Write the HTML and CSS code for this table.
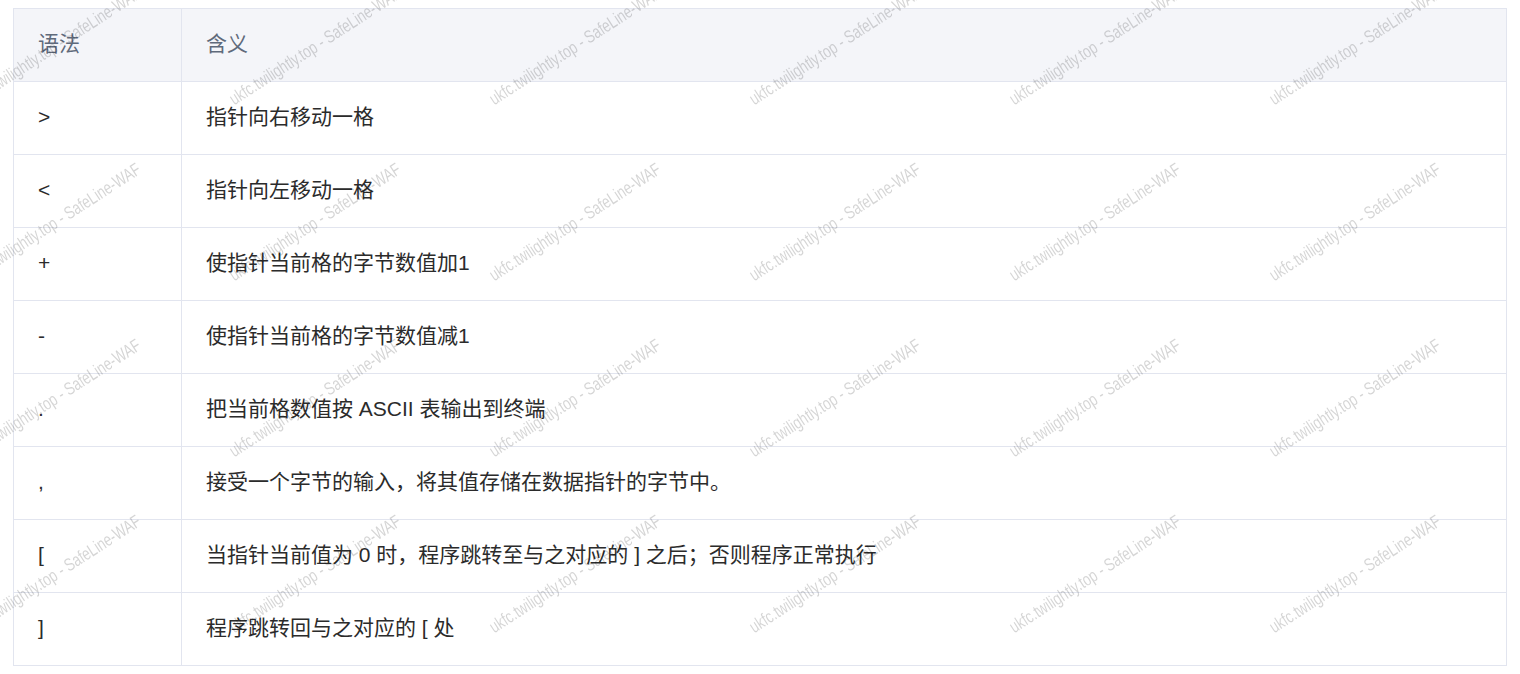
FILE: index.html
```html
<!DOCTYPE html>
<html lang="zh-CN">
<head>
  <meta charset="UTF-8">
  <meta name="viewport" content="width=device-width, initial-scale=1.0">
  <title>Brainfuck 语法</title>
  <link rel="stylesheet" href="styles.css">
</head>
<body>
  <table class="syntax-table">
    <thead>
      <tr>
        <th class="col-op">语法</th>
        <th>含义</th>
      </tr>
    </thead>
    <tbody>
      <tr><td class="col-op">&gt;</td><td>指针向右移动一格</td></tr>
      <tr><td class="col-op">&lt;</td><td>指针向左移动一格</td></tr>
      <tr><td class="col-op">+</td><td>使指针当前格的字节数值加1</td></tr>
      <tr><td class="col-op">-</td><td>使指针当前格的字节数值减1</td></tr>
      <tr><td class="col-op">.</td><td>把当前格数值按 ASCII 表输出到终端</td></tr>
      <tr><td class="col-op">,</td><td>接受一个字节的输入，将其值存储在数据指针的字节中。</td></tr>
      <tr><td class="col-op">[</td><td>当指针当前值为 0 时，程序跳转至与之对应的 ] 之后；否则程序正常执行</td></tr>
      <tr><td class="col-op">]</td><td>程序跳转回与之对应的 [ 处</td></tr>
    </tbody>
  </table>

  <div class="watermarks" aria-hidden="true">
    <span>ukfc.twilightly.top - SafeLine-WAF</span>
    <span>ukfc.twilightly.top - SafeLine-WAF</span>
    <span>ukfc.twilightly.top - SafeLine-WAF</span>
    <span>ukfc.twilightly.top - SafeLine-WAF</span>
    <span>ukfc.twilightly.top - SafeLine-WAF</span>
    <span>ukfc.twilightly.top - SafeLine-WAF</span>
    <span>ukfc.twilightly.top - SafeLine-WAF</span>
    <span>ukfc.twilightly.top - SafeLine-WAF</span>
    <span>ukfc.twilightly.top - SafeLine-WAF</span>
    <span>ukfc.twilightly.top - SafeLine-WAF</span>
    <span>ukfc.twilightly.top - SafeLine-WAF</span>
    <span>ukfc.twilightly.top - SafeLine-WAF</span>
    <span>ukfc.twilightly.top - SafeLine-WAF</span>
    <span>ukfc.twilightly.top - SafeLine-WAF</span>
    <span>ukfc.twilightly.top - SafeLine-WAF</span>
    <span>ukfc.twilightly.top - SafeLine-WAF</span>
    <span>ukfc.twilightly.top - SafeLine-WAF</span>
    <span>ukfc.twilightly.top - SafeLine-WAF</span>
    <span>ukfc.twilightly.top - SafeLine-WAF</span>
    <span>ukfc.twilightly.top - SafeLine-WAF</span>
    <span>ukfc.twilightly.top - SafeLine-WAF</span>
    <span>ukfc.twilightly.top - SafeLine-WAF</span>
    <span>ukfc.twilightly.top - SafeLine-WAF</span>
    <span>ukfc.twilightly.top - SafeLine-WAF</span>
  </div>
</body>
</html>
```

FILE: styles.css
```css
body {
  margin: 0;
  background: #ffffff;
  font-family: 'Liberation Sans', 'Noto Sans CJK SC', sans-serif;
  color: #2b2b2b;
  overflow: hidden;
}

.syntax-table {
  width: 1494px;
  margin: 8px 0 0 13px;
  border-collapse: collapse;
  font-size: 21px;
  line-height: 1.2;
}

.syntax-table th,
.syntax-table td {
  height: 70px;
  padding: 0 24px 2px;
  border: 1px solid #e2e5ef;
  text-align: left;
  vertical-align: middle;
}

.syntax-table th {
  background: #f4f5f9;
  color: #5f6a7b;
  font-weight: normal;
}

.syntax-table .col-op {
  width: 119px;
}

/* watermark overlay */
.watermarks {
  position: fixed;
  top: -42px;
  left: -75px;
  display: grid;
  grid-template-columns: repeat(6, 260px);
  grid-auto-rows: 176px;
  pointer-events: none;
}

.watermarks span {
  display: flex;
  align-items: center;
  justify-content: center;
  white-space: nowrap;
  font-family: 'Liberation Sans', sans-serif;
  font-size: 18px;
  color: rgba(0, 0, 0, 0.17);
  transform: rotate(-33deg) scaleX(0.75);
}
```
